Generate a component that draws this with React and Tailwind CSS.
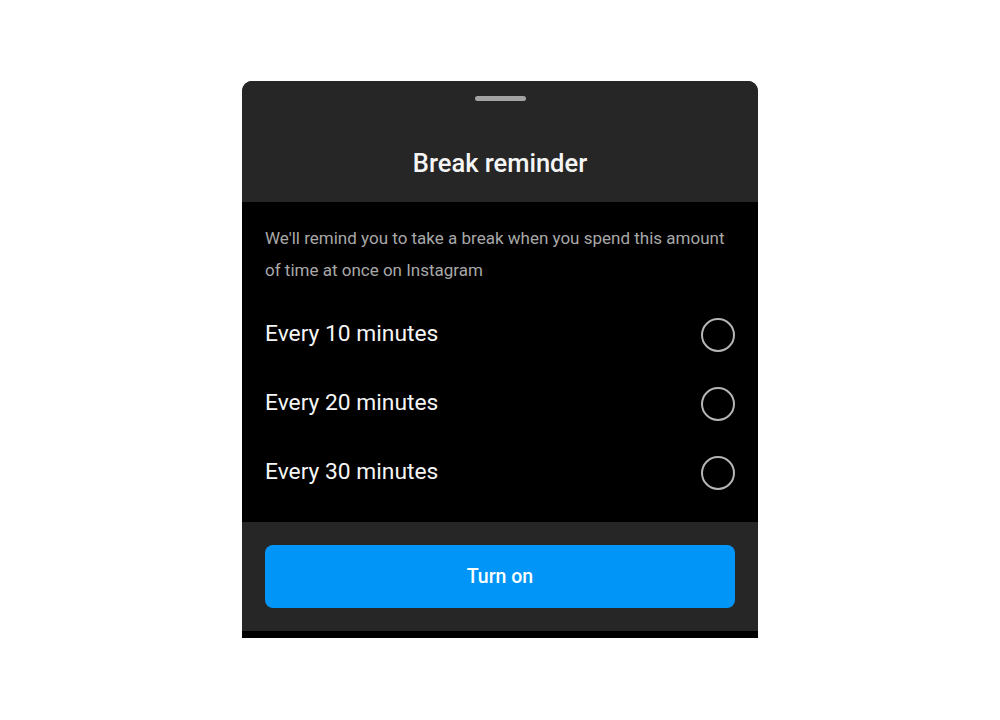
const OPTIONS = ["Every 10 minutes", "Every 20 minutes", "Every 30 minutes"];

function Radio() {
  return <span className="w-[34px] h-[34px] rounded-full border-[2.5px] border-[#b5b5b5] shrink-0" />;
}

export default function App() {
  return (
    <div
      className="h-screen w-full bg-white flex items-center justify-center"
      style={{ fontFamily: "Roboto, 'Noto Sans', sans-serif" }}
    >
      <div className="w-[516px] h-[557px] -mt-px flex flex-col rounded-t-[10px] overflow-hidden bg-black">
        {/* Sheet header */}
        <div className="h-[121px] bg-[#262626] flex flex-col items-center pt-[15px]">
          <div className="w-[51px] h-[5px] rounded-full bg-[#a3a3a3]" />
          <h2 className="mt-[46px] text-[25.5px] leading-[32px] font-medium text-[#f5f5f5]">Break reminder</h2>
        </div>

        {/* Options */}
        <div className="h-[320px] bg-black px-[23px] pt-[20px]">
          <p className="text-[17px] leading-[32px] text-[#a8a8a8] -mr-[8px]">
            We'll remind you to take a break when you spend this amount of time at once on Instagram
          </p>
          <div className="mt-[14px] flex flex-col">
            {OPTIONS.map((label) => (
              <div key={label} className="h-[69px] flex items-center justify-between">
                <span className="text-[22.8px] text-[#f5f5f5]">{label}</span>
                <Radio />
              </div>
            ))}
          </div>
        </div>

        {/* Footer */}
        <div className="h-[109px] bg-[#262626] px-[23px] pt-[23px]">
          <button className="w-full h-[63px] rounded-[8px] bg-[#0095f6] text-white text-[19.5px] font-medium">
            Turn on
          </button>
        </div>
        <div className="h-[7px] bg-black" />
      </div>
    </div>
  );
}
